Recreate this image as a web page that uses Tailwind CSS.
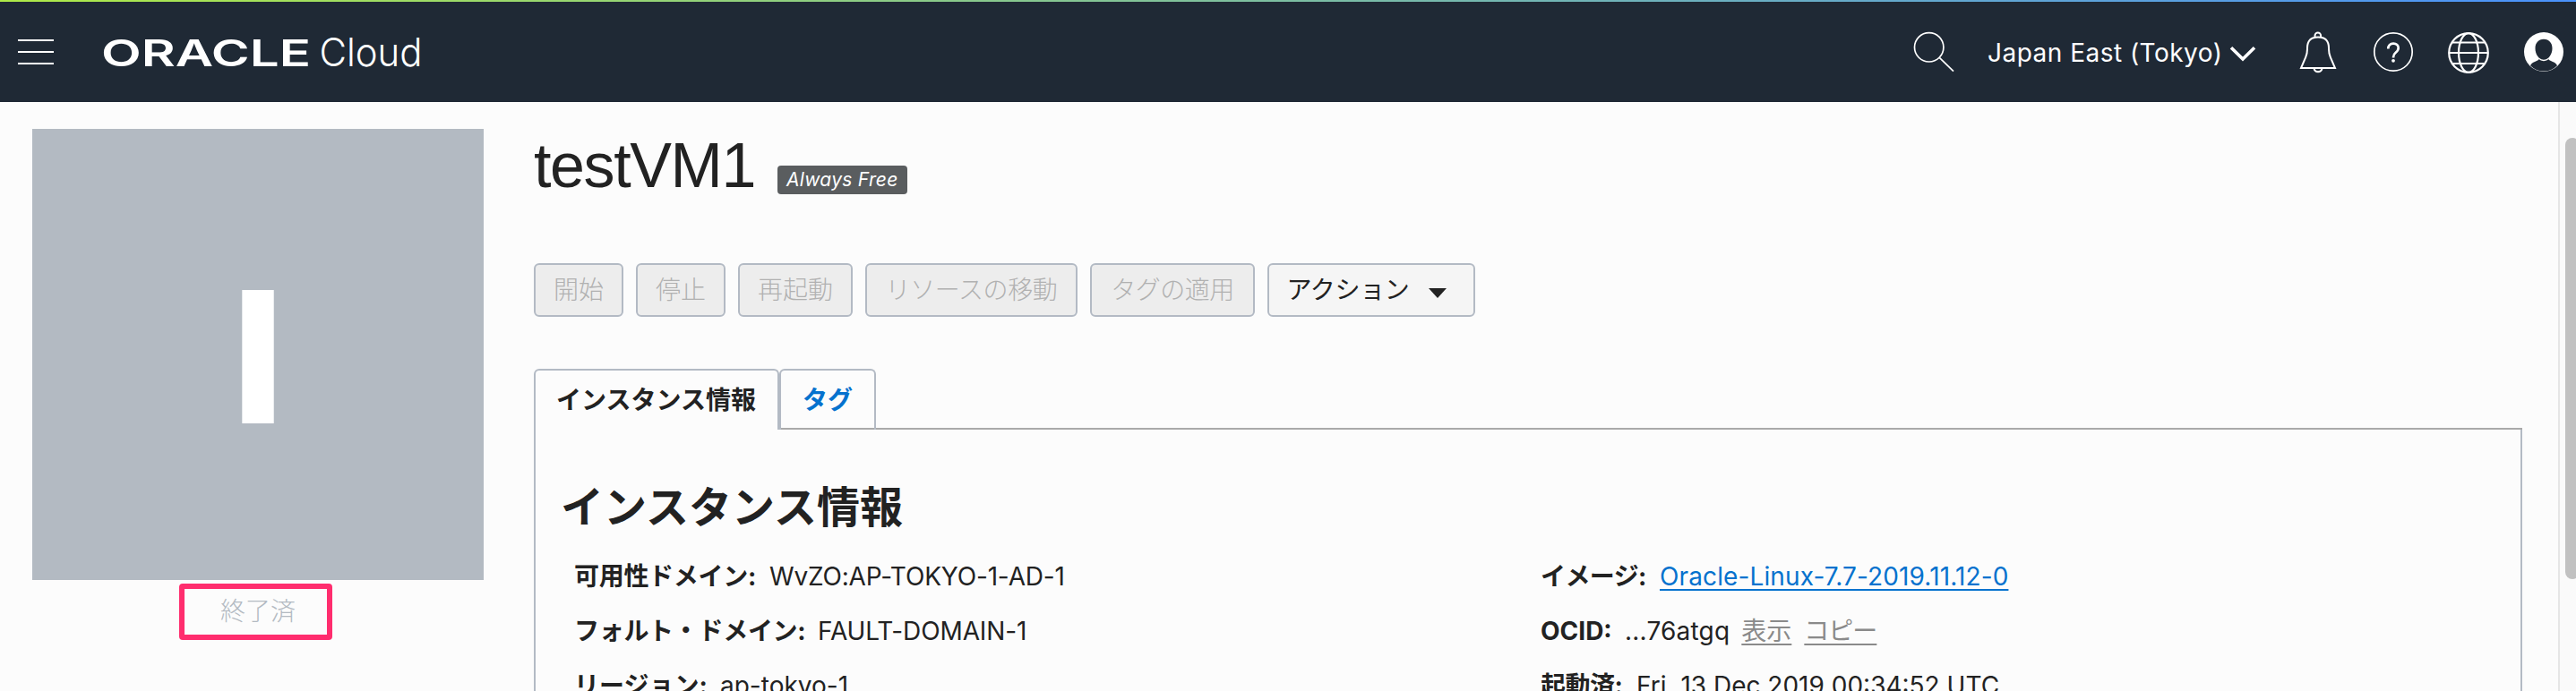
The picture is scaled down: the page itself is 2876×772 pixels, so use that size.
<!DOCTYPE html>
<html lang="ja">
<head>
<meta charset="utf-8">
<title>Oracle Cloud - testVM1</title>
<script src="https://cdn.jsdelivr.net/npm/@tailwindcss/browser@4"></script>
</head>
<body class="bg-[#fcfcfc]">
<div class="flex h-[772px] w-[2876px] flex-col overflow-hidden bg-[#fcfcfc] font-[Inter,'Noto_Sans_CJK_JP',sans-serif] text-[28px] text-[#222]">
  <div class="h-[2px] shrink-0 bg-linear-to-r/srgb from-[#aeea48] to-[#4a92fc]"></div>
  <header class="flex h-[112px] shrink-0 items-center justify-between bg-[#1f2935] pr-[13px] pl-5 text-white">
    <div class="flex items-center">
      <svg class="h-[50px] w-10" viewBox="20 33 40 50" fill="#fff"><path d="M20 44h40v2H20zM20 57h40v2H20zM20 70h40v2H20z"/></svg>
      <svg class="ml-14 h-[50px] w-[360px] overflow-visible" viewBox="116 33 360 50" fill="#fff">
        <text x="113" y="74" font-family="Inter, sans-serif" font-size="41.5" font-weight="600" textLength="234" lengthAdjust="spacingAndGlyphs">ORACLE</text>
        <text x="356.500" y="74.3" font-family="Inter, sans-serif" font-size="44" font-weight="300" textLength="115" lengthAdjust="spacingAndGlyphs">Cloud</text>
      </svg>
    </div>
    <div class="flex items-center">
      <svg class="h-[50px] w-[46px]" viewBox="2136 33 46 50" fill="none" stroke="#fff" stroke-width="1.7"><circle cx="2153.7" cy="52.8" r="16.2"/><path d="M2165 64.2 2181 79.6"/></svg>
      <span class="ml-[37px] w-[262px] pt-[2px] leading-[50px] tracking-[0.48px] whitespace-nowrap">Japan East (Tokyo)</span>
      <svg class="ml-2 h-[50px] w-[30px]" viewBox="2489 33 30 50" fill="none" stroke="#fff" stroke-width="3.6"><path d="M2491 53.2 2504 66 2517 53.2"/></svg>
      <svg class="ml-12 h-[50px] w-[42px]" viewBox="2567 33 42 50" fill="none" stroke="#fff" stroke-width="2"><path d="M2584.5 42.5v-2.7a3.3 3.3 0 0 1 6.6 0v2.7M2569 76h38l-5.200-12.200c-1.300-3-1.800-5.500-1.800-9v-1c0-8-4.500-12.200-12-12.200s-12 4.200-12 12.200v1c0 3.500-.5 6-1.800 9zM2583.500 76.500a4.600 4.600 0 0 0 9 0"/></svg>
      <svg class="ml-10 h-[50px] w-[46px]" viewBox="2649 33 46 50" fill="none" stroke="#fff"><circle cx="2672" cy="58" r="21.200" stroke-width="1.7"/><path d="M2666.300 54.500c0-3.600 2.300-5.900 5.800-5.900 3.400 0 5.600 2.100 5.600 5 0 2.400-1.100 3.700-3 5.200-1.900 1.500-2.600 2.300-2.600 5v.6" stroke-width="2.700"/><circle cx="2672" cy="67.800" r="1.900" fill="#fff" stroke="none"/></svg>
      <svg class="ml-[37px] h-[50px] w-12" viewBox="2732 33 48 50" fill="none" stroke="#fff" stroke-width="2.200"><circle cx="2756" cy="59" r="21.800"/><ellipse cx="2756" cy="59" rx="11" ry="21.800"/><path d="M2734 59h44M2738 47.500h36M2738 71h36"/></svg>
      <svg class="ml-[37px] h-[50px] w-[46px]" viewBox="2817 33 46 50"><circle cx="2840" cy="58" r="22" fill="#fff"/><path d="M2835 65c0 2-2 2.800-5 3.900-2.500.9-4.200 2.300-5 4.300a20.800 20.800 0 0 0 30 0c-.8-2-2.500-3.400-5-4.300-3-1.100-5-1.900-5-3.900z" fill="#1f2935"/><path d="M2840 43.800c6 0 9.500 4.300 9.500 10.200 0 6.500-4 12.700-9.500 12.700s-9.500-6.200-9.500-12.700c0-5.900 3.500-10.200 9.500-10.200z" fill="#1f2935"/><path d="M2834.500 65.300c1.600 1.500 3.400 2.200 5.500 2.200s3.900-.7 5.500-2.200" fill="none" stroke="#fff" stroke-width="1.300"/></svg>
    </div>
  </header>

  <div class="flex min-h-0 flex-1">
    <aside class="relative ml-9 w-[504px] shrink-0 pt-[30px]">
      <div class="flex h-[504px] items-center justify-center bg-[#b3bac2] pt-[3px] text-[205px] leading-[206px] font-[850] text-white">I</div>
      <div class="pt-[11px] text-center leading-[48px] font-light text-[#b3bac2]">終了済</div>
      <div class="absolute top-[538px] left-[164px] h-[63px] w-[171px] rounded-[4px] border-6 border-[#ff2d6e]"></div>
    </aside>

    <main class="ml-14 flex w-[2220px] shrink-0 flex-col pt-[35px]">
      <div class="flex h-[76px] shrink-0 items-start">
        <h1 class="w-[272px] font-['Liberation_Sans',sans-serif] text-[70px] leading-[72px] tracking-[-1.400px] whitespace-nowrap">testVM1</h1>
        <span class="mt-9 h-8 w-[145px] rounded-[4px] bg-[#5a5d5f] pl-[10px] text-[21px] leading-8 tracking-[0.300px] whitespace-nowrap text-white italic">Always Free</span>
      </div>

      <div class="mt-[69px] flex shrink-0 gap-[14px] leading-[56px] font-light whitespace-nowrap">
        <button class="h-[60px] w-[100px] rounded-[6px] border-2 border-[#b3bac4] bg-[#ededed] text-center text-[#b1b1b1]">開始</button>
        <button class="h-[60px] w-[100px] rounded-[6px] border-2 border-[#b3bac4] bg-[#ededed] text-center text-[#b1b1b1]">停止</button>
        <button class="h-[60px] w-[128px] rounded-[6px] border-2 border-[#b3bac4] bg-[#ededed] text-center text-[#b1b1b1]">再起動</button>
        <button class="h-[60px] w-[237px] rounded-[6px] border-2 border-[#b3bac4] bg-[#ededed] text-center tracking-[-0.400px] text-[#b1b1b1]">リソースの移動</button>
        <button class="h-[60px] w-[184px] rounded-[6px] border-2 border-[#b3bac4] bg-[#ededed] text-center tracking-[-0.500px] text-[#b1b1b1]">タグの適用</button>
        <button class="flex h-[60px] w-[232px] items-center rounded-[6px] border-2 border-[#b3bac4] bg-[#f5f5f5] pl-[18px] font-normal">
          <span class="w-[140px] tracking-[-0.300px]">アクション</span>
          <svg class="mt-[7px] ml-5 h-[11px] w-5" viewBox="0 0 20 11" fill="#222"><path d="M0 0h20L10 11z"/></svg>
        </button>
      </div>

      <div class="mt-[58px] flex h-[68px] shrink-0 leading-[66px] font-bold">
        <div class="w-[274px] rounded-t-[6px] border-2 border-b-0 border-[#b3bac4] pl-[23px]">インスタンス情報</div>
        <div class="w-[108px] rounded-t-[6px] border-2 border-b-0 border-[#b3bac4] text-center text-[#0572ce] shadow-[inset_0_-2px_#a9a9a9]">タグ</div>
        <div class="flex-1 border-b-2 border-[#a9a9a9]"></div>
      </div>

      <section class="min-h-0 flex-1 border-x-2 border-[#b3bac4]">
        <h2 class="mt-[51px] pl-[28px] text-[48px] leading-[71px] font-bold">インスタンス情報</h2>
        <div class="mt-3 flex pl-[43px] leading-[61px] whitespace-nowrap">
          <dl class="w-[1079px]">
            <div class="flex"><dt class="w-[218px] font-bold tracking-[-0.300px]">可用性ドメイン:</dt><dd class="tracking-[-0.170px]">WvZO:AP-TOKYO-1-AD-1</dd></div>
            <div class="flex"><dt class="w-[272px] font-bold tracking-[-0.300px]">フォルト・ドメイン:</dt><dd class="tracking-[-0.100px]">FAULT-DOMAIN-1</dd></div>
            <div class="flex"><dt class="w-[163px] font-bold">リージョン:</dt><dd>ap-tokyo-1</dd></div>
          </dl>
          <dl>
            <div class="flex"><dt class="w-[133px] font-bold tracking-[-0.600px]">イメージ:</dt><dd><a class="tracking-[0.120px] text-[#0572ce] underline decoration-2 underline-offset-4 [text-decoration-skip-ink:none]">Oracle-Linux-7.7-2019.11.12-0</a></dd></div>
            <div class="flex"><dt class="w-[94px] font-bold">OCID:</dt><dd class="tracking-[0.200px]">...76atgq</dd><dd class="ml-[13px] text-[#8a8a8a] underline decoration-2 underline-offset-4 [text-decoration-skip-ink:none]">表示</dd><dd class="ml-[14px] tracking-[-1px] text-[#8a8a8a] underline decoration-2 underline-offset-4 [text-decoration-skip-ink:none]">コピー</dd></div>
            <div class="flex"><dt class="w-[107px] font-bold tracking-[-0.500px]">起動済:</dt><dd>Fri, 13 Dec 2019 00:34:52 UTC</dd></div>
          </dl>
        </div>
      </section>
    </main>

    <div class="ml-10 w-5 shrink-0 overflow-hidden border-l-2 border-[#e6e6e6] bg-[#fafafa] pt-10 pl-[6px]">
      <div class="h-[493px] w-4 rounded-full bg-[#c1c1c1]"></div>
    </div>
  </div>
</div>
</body>
</html>
